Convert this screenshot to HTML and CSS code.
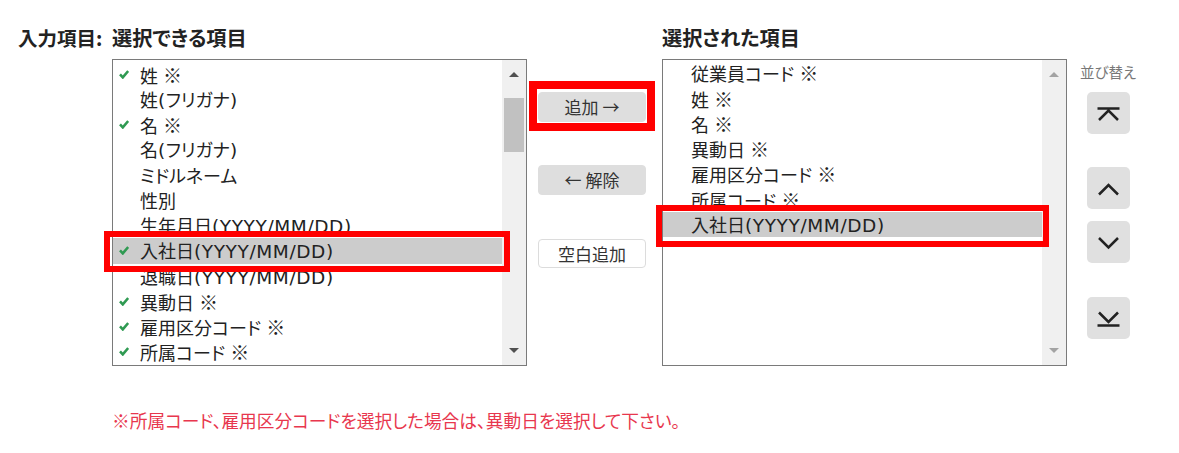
FILE: index.html
```html
<!DOCTYPE html>
<html lang="ja">
<head>
<meta charset="utf-8">
<link rel="stylesheet" href="styles.css">
</head>
<body>
<div class="page">
  <div class="grid">
    <div class="h">入力項目:</div>
    <div class="h">選択できる項目</div>
    <div></div>
    <div class="h">選択された項目</div>
    <div></div>

    <div></div>
    <div class="listbox left">
      <ul class="list">
        <li><span class="chk"><svg viewBox="0 0 10 9" width="10" height="9"><path d="M1 4.4 L3.8 7.4 L9.2 1" fill="none" stroke="#2f9a52" stroke-width="2.6"/></svg></span>姓 <span class="rm">※</span></li>
        <li>姓<span class="lat">(</span>フリガナ<span class="lat">)</span></li>
        <li><span class="chk"><svg viewBox="0 0 10 9" width="10" height="9"><path d="M1 4.4 L3.8 7.4 L9.2 1" fill="none" stroke="#2f9a52" stroke-width="2.6"/></svg></span>名 <span class="rm">※</span></li>
        <li>名<span class="lat">(</span>フリガナ<span class="lat">)</span></li>
        <li>ミドルネーム</li>
        <li>性別</li>
        <li>生年月日<span class="lat">(YYYY/MM/DD)</span></li>
        <li class="sel"><span class="chk"><svg viewBox="0 0 10 9" width="10" height="9"><path d="M1 4.4 L3.8 7.4 L9.2 1" fill="none" stroke="#2f9a52" stroke-width="2.6"/></svg></span>入社日<span class="lat">(YYYY/MM/DD)</span></li>
        <li>退職日<span class="lat">(YYYY/MM/DD)</span></li>
        <li><span class="chk"><svg viewBox="0 0 10 9" width="10" height="9"><path d="M1 4.4 L3.8 7.4 L9.2 1" fill="none" stroke="#2f9a52" stroke-width="2.6"/></svg></span>異動日 <span class="rm">※</span></li>
        <li><span class="chk"><svg viewBox="0 0 10 9" width="10" height="9"><path d="M1 4.4 L3.8 7.4 L9.2 1" fill="none" stroke="#2f9a52" stroke-width="2.6"/></svg></span>雇用区分コード <span class="rm">※</span></li>
        <li><span class="chk"><svg viewBox="0 0 10 9" width="10" height="9"><path d="M1 4.4 L3.8 7.4 L9.2 1" fill="none" stroke="#2f9a52" stroke-width="2.6"/></svg></span>所属コード <span class="rm">※</span></li>
      </ul>
      <div class="sb">
        <div class="sb-btn"><span class="tri up"></span></div>
        <div class="sb-track"><div class="thumb"></div></div>
        <div class="sb-btn"><span class="tri down"></span></div>
      </div>
    </div>

    <div class="mid">
      <button class="btn gray">追加 →</button>
      <button class="btn gray">← 解除</button>
      <button class="btn white">空白追加</button>
    </div>

    <div class="listbox right">
      <ul class="list">
        <li>従業員コード <span class="rm">※</span></li>
        <li>姓 <span class="rm">※</span></li>
        <li>名 <span class="rm">※</span></li>
        <li>異動日 <span class="rm">※</span></li>
        <li>雇用区分コード <span class="rm">※</span></li>
        <li>所属コード <span class="rm">※</span></li>
        <li class="sel">入社日<span class="lat">(YYYY/MM/DD)</span></li>
      </ul>
      <div class="sb disabled">
        <div class="sb-btn"><span class="tri up"></span></div>
        <div class="sb-track"></div>
        <div class="sb-btn"><span class="tri down"></span></div>
      </div>
    </div>

    <div class="sort">
      <div class="sort-label">並び替え</div>
      <button class="sbtn first"><svg viewBox="0 0 43 42" width="43" height="42"><path d="M10.5 16.5 H32.5 M12 28 L21.5 18.5 L31 28" fill="none" stroke="#222" stroke-width="2.5"/></svg></button>
      <button class="sbtn up"><svg viewBox="0 0 43 42" width="43" height="42"><path d="M12 27.5 L21.5 18 L31 27.5" fill="none" stroke="#222" stroke-width="2.5"/></svg></button>
      <button class="sbtn down"><svg viewBox="0 0 43 42" width="43" height="42"><path d="M12 17 L21.5 26.5 L31 17" fill="none" stroke="#222" stroke-width="2.5"/></svg></button>
      <button class="sbtn last"><svg viewBox="0 0 43 42" width="43" height="42"><path d="M12 15.5 L21.5 25 L31 15.5 M10.5 28.5 H32.5" fill="none" stroke="#222" stroke-width="2.5"/></svg></button>
    </div>
  </div>

  <p class="note">※所属コード、雇用区分コードを選択した場合は、異動日を選択して下さい。</p>

  <div class="mark mark-left"></div>
  <div class="mark mark-add"></div>
  <div class="mark mark-right"></div>
</div>
</body>
</html>
```

FILE: styles.css
```css
* { box-sizing: border-box; }
html, body { margin: 0; padding: 0; background: #fff; }
body {
  font-family: "Noto Sans CJK JP", "Noto Sans", sans-serif;
  font-feature-settings: "palt";
  color: #222;
}
.page {
  position: relative;
  width: 1179px;
  height: 453px;
  padding: 25px 0 0 18px;
}
.grid {
  display: grid;
  grid-template-columns: 94px 415px 135px 405px 82px;
  grid-template-rows: 26px auto;
  row-gap: 8px;
}
.h {
  font-size: 20.2px;
  font-weight: bold;
  line-height: 26px;
  color: #222;
  white-space: nowrap;
}
.h:first-child { font-size: 19.5px; }
.listbox {
  display: flex;
  height: 307px;
  border: 1px solid #7a7a7a;
  background: #fff;
  overflow: hidden;
}
.list {
  list-style: none;
  margin: 0;
  padding: 0;
  flex: 1;
  overflow: hidden;
  font-size: 18px;
}
.left .list { padding-top: 1.6px; }
.right .list { padding-top: 0.4px; }
.list li {
  position: relative;
  height: 25.25px;
  line-height: 25.25px;
  padding-left: 27px;
  white-space: nowrap;
}
.right .list li { padding-left: 28px; }
.list li.sel { background: #cccccc; }
.lat {
  font-family: "DejaVu Sans", "Noto Sans", sans-serif;
  font-size: 18.5px;
  letter-spacing: 0.6px;
}
.rm {
  font-feature-settings: normal;
  font-size: 19px;
  margin-left: 1px;
}
.chk {
  position: absolute;
  left: 6px;
  top: 8px;
  width: 10px;
  height: 9px;
  display: block;
}
.chk svg { display: block; }
.sb {
  width: 24px;
  background: #f0f0f0;
  display: flex;
  flex-direction: column;
}
.sb-btn {
  height: 29px;
  display: flex;
  align-items: center;
  justify-content: center;
}
.sb-track { flex: 1; padding: 9px 2px 0 2px; }
.thumb { height: 54px; background: #c1c1c1; }
.tri { width: 0; height: 0; border-left: 5.5px solid transparent; border-right: 5.5px solid transparent; }
.tri.up { border-bottom: 5.5px solid #505050; }
.tri.down { border-top: 5.5px solid #505050; }
.disabled .tri.up { border-bottom-color: #a3a3a3; }
.disabled .tri.down { border-top-color: #a3a3a3; }

.mid {
  display: flex;
  flex-direction: column;
  align-items: flex-start;
  padding: 33px 0 0 11px;
}
.btn {
  width: 108px;
  height: 30px;
  border-radius: 4px;
  font-family: "Noto Sans CJK JP", "Noto Sans", sans-serif;
  font-feature-settings: "palt";
  font-size: 17px;
  color: #333;
  padding: 0;
  line-height: 28px;
  cursor: pointer;
}
.btn.gray { background: #dedede; border: 1px solid #dedede; margin-bottom: 43px; }
.btn.gray + .btn.gray { margin-bottom: 44px; }
.btn.white { background: #fff; border: 1px solid #dcdcdc; height: 29px; }

.sort {
  display: flex;
  flex-direction: column;
  align-items: center;
  padding-top: 3px;
}
.sort-label {
  font-size: 14.5px;
  line-height: 20px;
  color: #777;
  margin-bottom: 10px;
  white-space: nowrap;
}
.sbtn {
  width: 43px;
  height: 42px;
  padding: 0;
  border: none;
  border-radius: 5px;
  background: #e0e0e0;
  display: block;
}
.sbtn svg { display: block; }
.sbtn.first { margin-bottom: 33px; }
.sbtn.up { margin-bottom: 12px; }
.sbtn.down { margin-bottom: 34px; }

.note {
  margin: 42px 0 0 94px;
  font-size: 17.7px;
  line-height: 24px;
  color: #e8374e;
  white-space: nowrap;
}

.mark {
  position: absolute;
  border-style: solid;
  border-color: #ff0000;
}
.mark-left { left: 104px; top: 231px; width: 406px; height: 41px; border-width: 6px; }
.mark-add { left: 529px; top: 81px; width: 126px; height: 50px; border-width: 8px; }
.mark-right { left: 656px; top: 205px; width: 393px; height: 42px; border-width: 6px; }
```
